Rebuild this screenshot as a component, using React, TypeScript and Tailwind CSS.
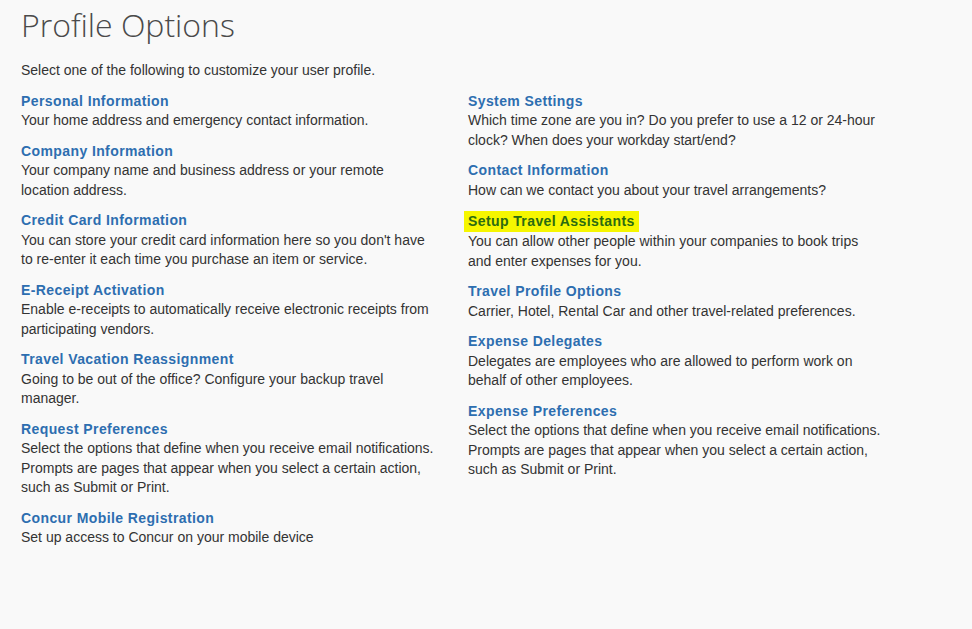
import React from "react";

type Option = { title: string; desc: string; highlight?: boolean };

const leftOptions: Option[] = [
  { title: "Personal Information", desc: "Your home address and emergency contact information." },
  { title: "Company Information", desc: "Your company name and business address or your remote location address." },
  { title: "Credit Card Information", desc: "You can store your credit card information here so you don't have to re-enter it each time you purchase an item or service." },
  { title: "E-Receipt Activation", desc: "Enable e-receipts to automatically receive electronic receipts from participating vendors." },
  { title: "Travel Vacation Reassignment", desc: "Going to be out of the office? Configure your backup travel manager." },
  { title: "Request Preferences", desc: "Select the options that define when you receive email notifications. Prompts are pages that appear when you select a certain action, such as Submit or Print." },
  { title: "Concur Mobile Registration", desc: "Set up access to Concur on your mobile device" },
];

const rightOptions: Option[] = [
  { title: "System Settings", desc: "Which time zone are you in? Do you prefer to use a 12 or 24-hour clock? When does your workday start/end?" },
  { title: "Contact Information", desc: "How can we contact you about your travel arrangements?" },
  { title: "Setup Travel Assistants", desc: "You can allow other people within your companies to book trips and enter expenses for you.", highlight: true },
  { title: "Travel Profile Options", desc: "Carrier, Hotel, Rental Car and other travel-related preferences." },
  { title: "Expense Delegates", desc: "Delegates are employees who are allowed to perform work on behalf of other employees." },
  { title: "Expense Preferences", desc: "Select the options that define when you receive email notifications. Prompts are pages that appear when you select a certain action, such as Submit or Print." },
];

function OptionItem({ opt }: { opt: Option }) {
  return (
    <div className="mb-[11px]">
      {opt.highlight ? (
        <a href="#" className="inline-block -ml-[4px] px-[4px] bg-[#f6f600] text-[#2b6b12] font-bold tracking-[0.4px] leading-[21px] -mt-[1px] mb-[-1px]">
          {opt.title}
        </a>
      ) : (
        <a href="#" className="block text-[#2d6eb0] font-bold tracking-[0.4px] leading-[19.5px]">
          {opt.title}
        </a>
      )}
      <p className="text-[#333] leading-[19.5px]">{opt.desc}</p>
    </div>
  );
}

export default function App() {
  return (
    <div className="min-h-[629px] w-full bg-[#f9f9f9] pl-[21px] pt-[3px] text-[14px] font-['Liberation_Sans',Arial,sans-serif]">
      <h1 className="font-['Open_Sans',sans-serif] font-light text-[32px] leading-[44px] text-[#4a4a4a]">Profile Options</h1>
      <p className="mt-[14px] text-[#333] leading-[19.5px]">Select one of the following to customize your user profile.</p>
      <div className="mt-[11px] flex gap-[33px]">
        <div className="w-[414px]">
          {leftOptions.map((o) => (
            <OptionItem key={o.title} opt={o} />
          ))}
        </div>
        <div className="w-[414px]">
          {rightOptions.map((o) => (
            <OptionItem key={o.title} opt={o} />
          ))}
        </div>
      </div>
    </div>
  );
}
